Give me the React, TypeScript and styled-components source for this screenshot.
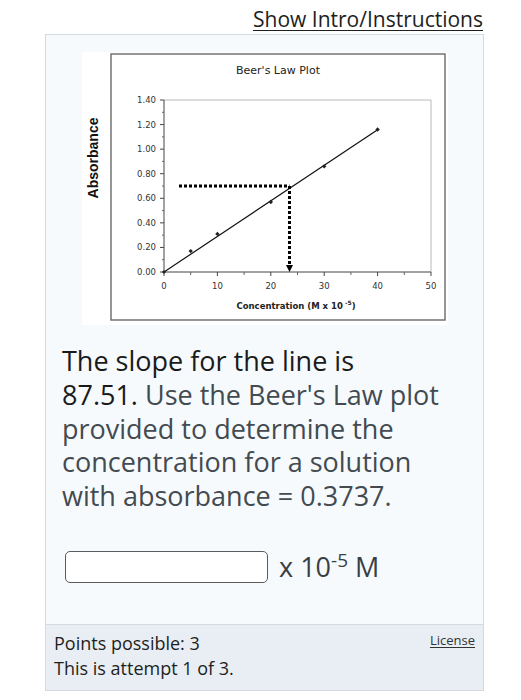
import React from "react";
import styled, { createGlobalStyle } from "styled-components";

const GlobalStyle = createGlobalStyle`
  html, body { margin: 0; padding: 0; background: #ffffff; }
  body { font-family: "Open Sans", "Noto Sans", sans-serif; color: #222; }
`;

const Page = styled.div`
  width: 521px;
  display: flex;
  flex-direction: column;
`;

const TopBar = styled.div`
  display: flex;
  justify-content: flex-end;
  padding: 6px 38px 0 0;
  height: 28px;
`;

const IntroLink = styled.a`
  font-size: 21px;
  line-height: 26px;
  color: #1e1e1e;
  text-decoration: underline;
  text-underline-offset: 3px;
  text-decoration-thickness: 1px;
  cursor: pointer;
`;

const Panel = styled.section`
  margin-left: 45px;
  width: 437px;
  border: 1px solid #d3dbe1;
  background: #f6fafd;
  display: flex;
  flex-direction: column;
`;

const QuestionBody = styled.div`
  padding: 17px 16px 41px 16px;
  display: flex;
  flex-direction: column;
`;

const ChartFrame = styled.div`
  align-self: center;
  width: 366px;
  height: 273px;
  background: #ffffff;
  svg { display: block; }
`;

const QuestionText = styled.p`
  margin: 19px 0 0 0;
  max-width: 396px;
  font-size: 27px;
  line-height: 33.75px;
  color: #434a50;
`;

const Strong = styled.span`
  color: #1a1a1a;
`;

const AnswerRow = styled.div`
  margin-top: 38px;
  display: flex;
  align-items: center;
  gap: 11px;
  padding-left: 3px;
`;

const AnswerInput = styled.input`
  width: 203px;
  height: 32px;
  box-sizing: border-box;
  border: 1px solid #5b5b5b;
  border-radius: 5px;
  background: #ffffff;
  font-family: inherit;
  font-size: 18px;
  padding: 0 6px;
`;

const Unit = styled.span`
  font-size: 27px;
  color: #3a3f44;
  line-height: 32px;
`;

const Sup = styled.sup`
  font-size: 19px;
  line-height: 0;
  vertical-align: 0.55em;
`;

const Footer = styled.footer`
  border-top: 1px solid #d3dbe1;
  background: #e8eef3;
  padding: 6px 8px 9px 8px;
  display: flex;
  justify-content: space-between;
  align-items: flex-start;
`;

const FooterInfo = styled.div`
  font-size: 18px;
  line-height: 25px;
  color: #1e1e1e;
`;

const LicenseLink = styled.a`
  font-size: 13px;
  line-height: 18px;
  margin-top: 0;
  color: #333;
  text-decoration: underline;
  text-underline-offset: 2px;
`;

const PLOT_L = 82;
const PLOT_R = 349;
const PLOT_T = 48;
const PLOT_B = 220;
const xs = (c: number) => PLOT_L + (c / 50) * (PLOT_R - PLOT_L);
const ys = (a: number) => PLOT_B - (a / 1.4) * (PLOT_B - PLOT_T);

const points: [number, number][] = [
  [5, 0.17],
  [10, 0.31],
  [20, 0.57],
  [30, 0.86],
  [40, 1.16],
];

const BeerPlot: React.FC = () => {
  const yMajor = [0, 0.2, 0.4, 0.6, 0.8, 1.0, 1.2, 1.4];
  const yMinor = [0.1, 0.3, 0.5, 0.7, 0.9, 1.1, 1.3];
  const xMajor = [0, 10, 20, 30, 40, 50];
  const xMinor = [5, 15, 25, 35, 45];
  const cx = 23.5;
  const ay = 0.7;
  return (
    <svg width="366" height="273" viewBox="0 0 366 273">
      <rect x="29" y="2" width="334" height="266" fill="#fff" stroke="#6a6a6a" strokeWidth="1.4" />
      <text x="196" y="22" textAnchor="middle" fontFamily="DejaVu Sans, Verdana, sans-serif" fontSize="11" fill="#222">
        Beer's Law Plot
      </text>
      <text
        transform="translate(16,106) rotate(-90)"
        textAnchor="middle"
        fontFamily="Liberation Sans, Arial, sans-serif"
        fontSize="14"
        fontWeight="bold"
        fill="#111"
      >
        Absorbance
      </text>
      <polyline points={`${PLOT_L},${PLOT_T} ${PLOT_R},${PLOT_T} ${PLOT_R},${PLOT_B}`} fill="none" stroke="#b8b8b8" strokeWidth="1" />
      <line x1={PLOT_L} y1={PLOT_T} x2={PLOT_L} y2={PLOT_B} stroke="#444" strokeWidth="1" />
      <line x1={PLOT_L} y1={PLOT_B} x2={PLOT_R} y2={PLOT_B} stroke="#444" strokeWidth="1" />
      {yMajor.map((v) => (
        <g key={`ym${v}`}>
          <line x1={PLOT_L - 4} y1={ys(v)} x2={PLOT_L} y2={ys(v)} stroke="#444" strokeWidth="1" />
          <text x={PLOT_L - 8} y={ys(v) + 3} textAnchor="end" fontFamily="DejaVu Sans, Verdana, sans-serif" fontSize="8.5" fill="#333">
            {v.toFixed(2)}
          </text>
        </g>
      ))}
      {yMinor.map((v) => (
        <line key={`yn${v}`} x1={PLOT_L - 2} y1={ys(v)} x2={PLOT_L} y2={ys(v)} stroke="#666" strokeWidth="1" />
      ))}
      {xMajor.map((v) => (
        <g key={`xm${v}`}>
          <line x1={xs(v)} y1={PLOT_B} x2={xs(v)} y2={PLOT_B + 4} stroke="#444" strokeWidth="1" />
          <text x={xs(v)} y={PLOT_B + 17} textAnchor="middle" fontFamily="DejaVu Sans, Verdana, sans-serif" fontSize="8.5" fill="#333">
            {v}
          </text>
        </g>
      ))}
      {xMinor.map((v) => (
        <line key={`xn${v}`} x1={xs(v)} y1={PLOT_B} x2={xs(v)} y2={PLOT_B + 3} stroke="#666" strokeWidth="1" />
      ))}
      <text x="214" y="257" textAnchor="middle" fontFamily="DejaVu Sans, Verdana, sans-serif" fontSize="8.5" fontWeight="bold" fill="#222">
        Concentration (M x 10
        <tspan dy="-4" fontSize="6"> -5</tspan>
        <tspan dy="4">)</tspan>
      </text>
      <line x1={xs(0)} y1={ys(0)} x2={xs(40)} y2={ys(1.158)} stroke="#111" strokeWidth="1.2" />
      {points.map(([c, a]) => (
        <path
          key={`p${c}`}
          d={`M ${xs(c)} ${ys(a) - 2.2} L ${xs(c) + 2.2} ${ys(a)} L ${xs(c)} ${ys(a) + 2.2} L ${xs(c) - 2.2} ${ys(a)} Z`}
          fill="#222"
        />
      ))}
      <path d={`M ${xs(0)} ${ys(0) - 2} L ${xs(0) + 2} ${ys(0)} L ${xs(0)} ${ys(0) + 2} L ${xs(0) - 2} ${ys(0)} Z`} fill="#222" />
      <line x1={97} y1={ys(ay)} x2={xs(cx)} y2={ys(ay)} stroke="#000" strokeWidth="3" strokeDasharray="3 2" />
      <line x1={xs(cx)} y1={ys(ay)} x2={xs(cx)} y2={PLOT_B - 6} stroke="#000" strokeWidth="3" strokeDasharray="3 2" />
      <path d={`M ${xs(cx) - 3.5} ${PLOT_B - 7} L ${xs(cx) + 3.5} ${PLOT_B - 7} L ${xs(cx)} ${PLOT_B} Z`} fill="#000" />
    </svg>
  );
};

export default function App() {
  return (
    <Page>
      <GlobalStyle />
      <TopBar>
        <IntroLink>Show Intro/Instructions</IntroLink>
      </TopBar>
      <Panel>
        <QuestionBody>
          <ChartFrame>
            <BeerPlot />
          </ChartFrame>
          <QuestionText>
            <Strong>The slope for the line is</Strong>
            <br />
            <Strong>87.51.</Strong> Use the Beer's Law plot provided to determine the concentration for a solution with absorbance = 0.3737.
          </QuestionText>
          <AnswerRow>
            <AnswerInput type="text" aria-label="answer" />
            <Unit>
              x 10<Sup>-5</Sup> M
            </Unit>
          </AnswerRow>
        </QuestionBody>
        <Footer>
          <FooterInfo>
            Points possible: 3
            <br />
            This is attempt 1 of 3.
          </FooterInfo>
          <LicenseLink>License</LicenseLink>
        </Footer>
      </Panel>
    </Page>
  );
}
